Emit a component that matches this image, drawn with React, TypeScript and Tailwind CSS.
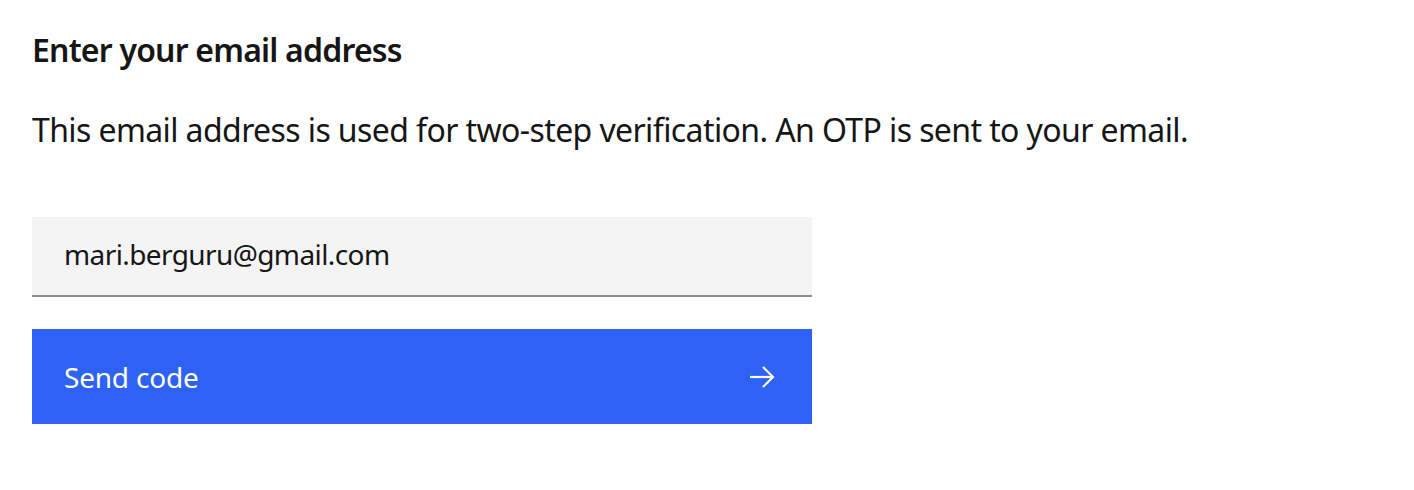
import React from 'react';

const ArrowRight: React.FC = () => (
  <svg width="26" height="22" viewBox="0 0 26 22" fill="none" className="shrink-0">
    <path d="M1 11H24" stroke="white" strokeWidth="2.2" />
    <path d="M14 1L24 11L14 21" stroke="white" strokeWidth="2.2" />
  </svg>
);

export default function App() {
  return (
    <div className="min-h-screen bg-white font-['Noto_Sans',sans-serif] text-[#161616]">
      <div className="flex flex-col pl-8 pt-[30px]">
        {/* Title */}
        <h2 className="text-[32px] leading-[40px] font-semibold tracking-[-0.8px]">Enter your email address</h2>

        {/* Description */}
        <p className="mt-[40px] text-[32px] leading-[40px] tracking-[-0.6px]">
          This email address is used for two-step verification. An OTP is sent to your email.
        </p>

        {/* Email field */}
        <div className="mt-[67px] w-[780px] h-[80px] bg-[#f4f4f4] border-b-2 border-[#8d8d8d] flex items-center px-8 pb-1">
          <span className="text-[28px] tracking-[-0.6px]">mari.berguru@gmail.com</span>
        </div>

        {/* Submit */}
        <button className="mt-[32px] w-[780px] h-[95px] bg-[#2d62f5] flex items-center justify-between pl-8 pr-[37px] text-white">
          <span className="text-[28px] tracking-[-0.2px]">Send code</span>
          <ArrowRight />
        </button>
      </div>
    </div>
  );
}
